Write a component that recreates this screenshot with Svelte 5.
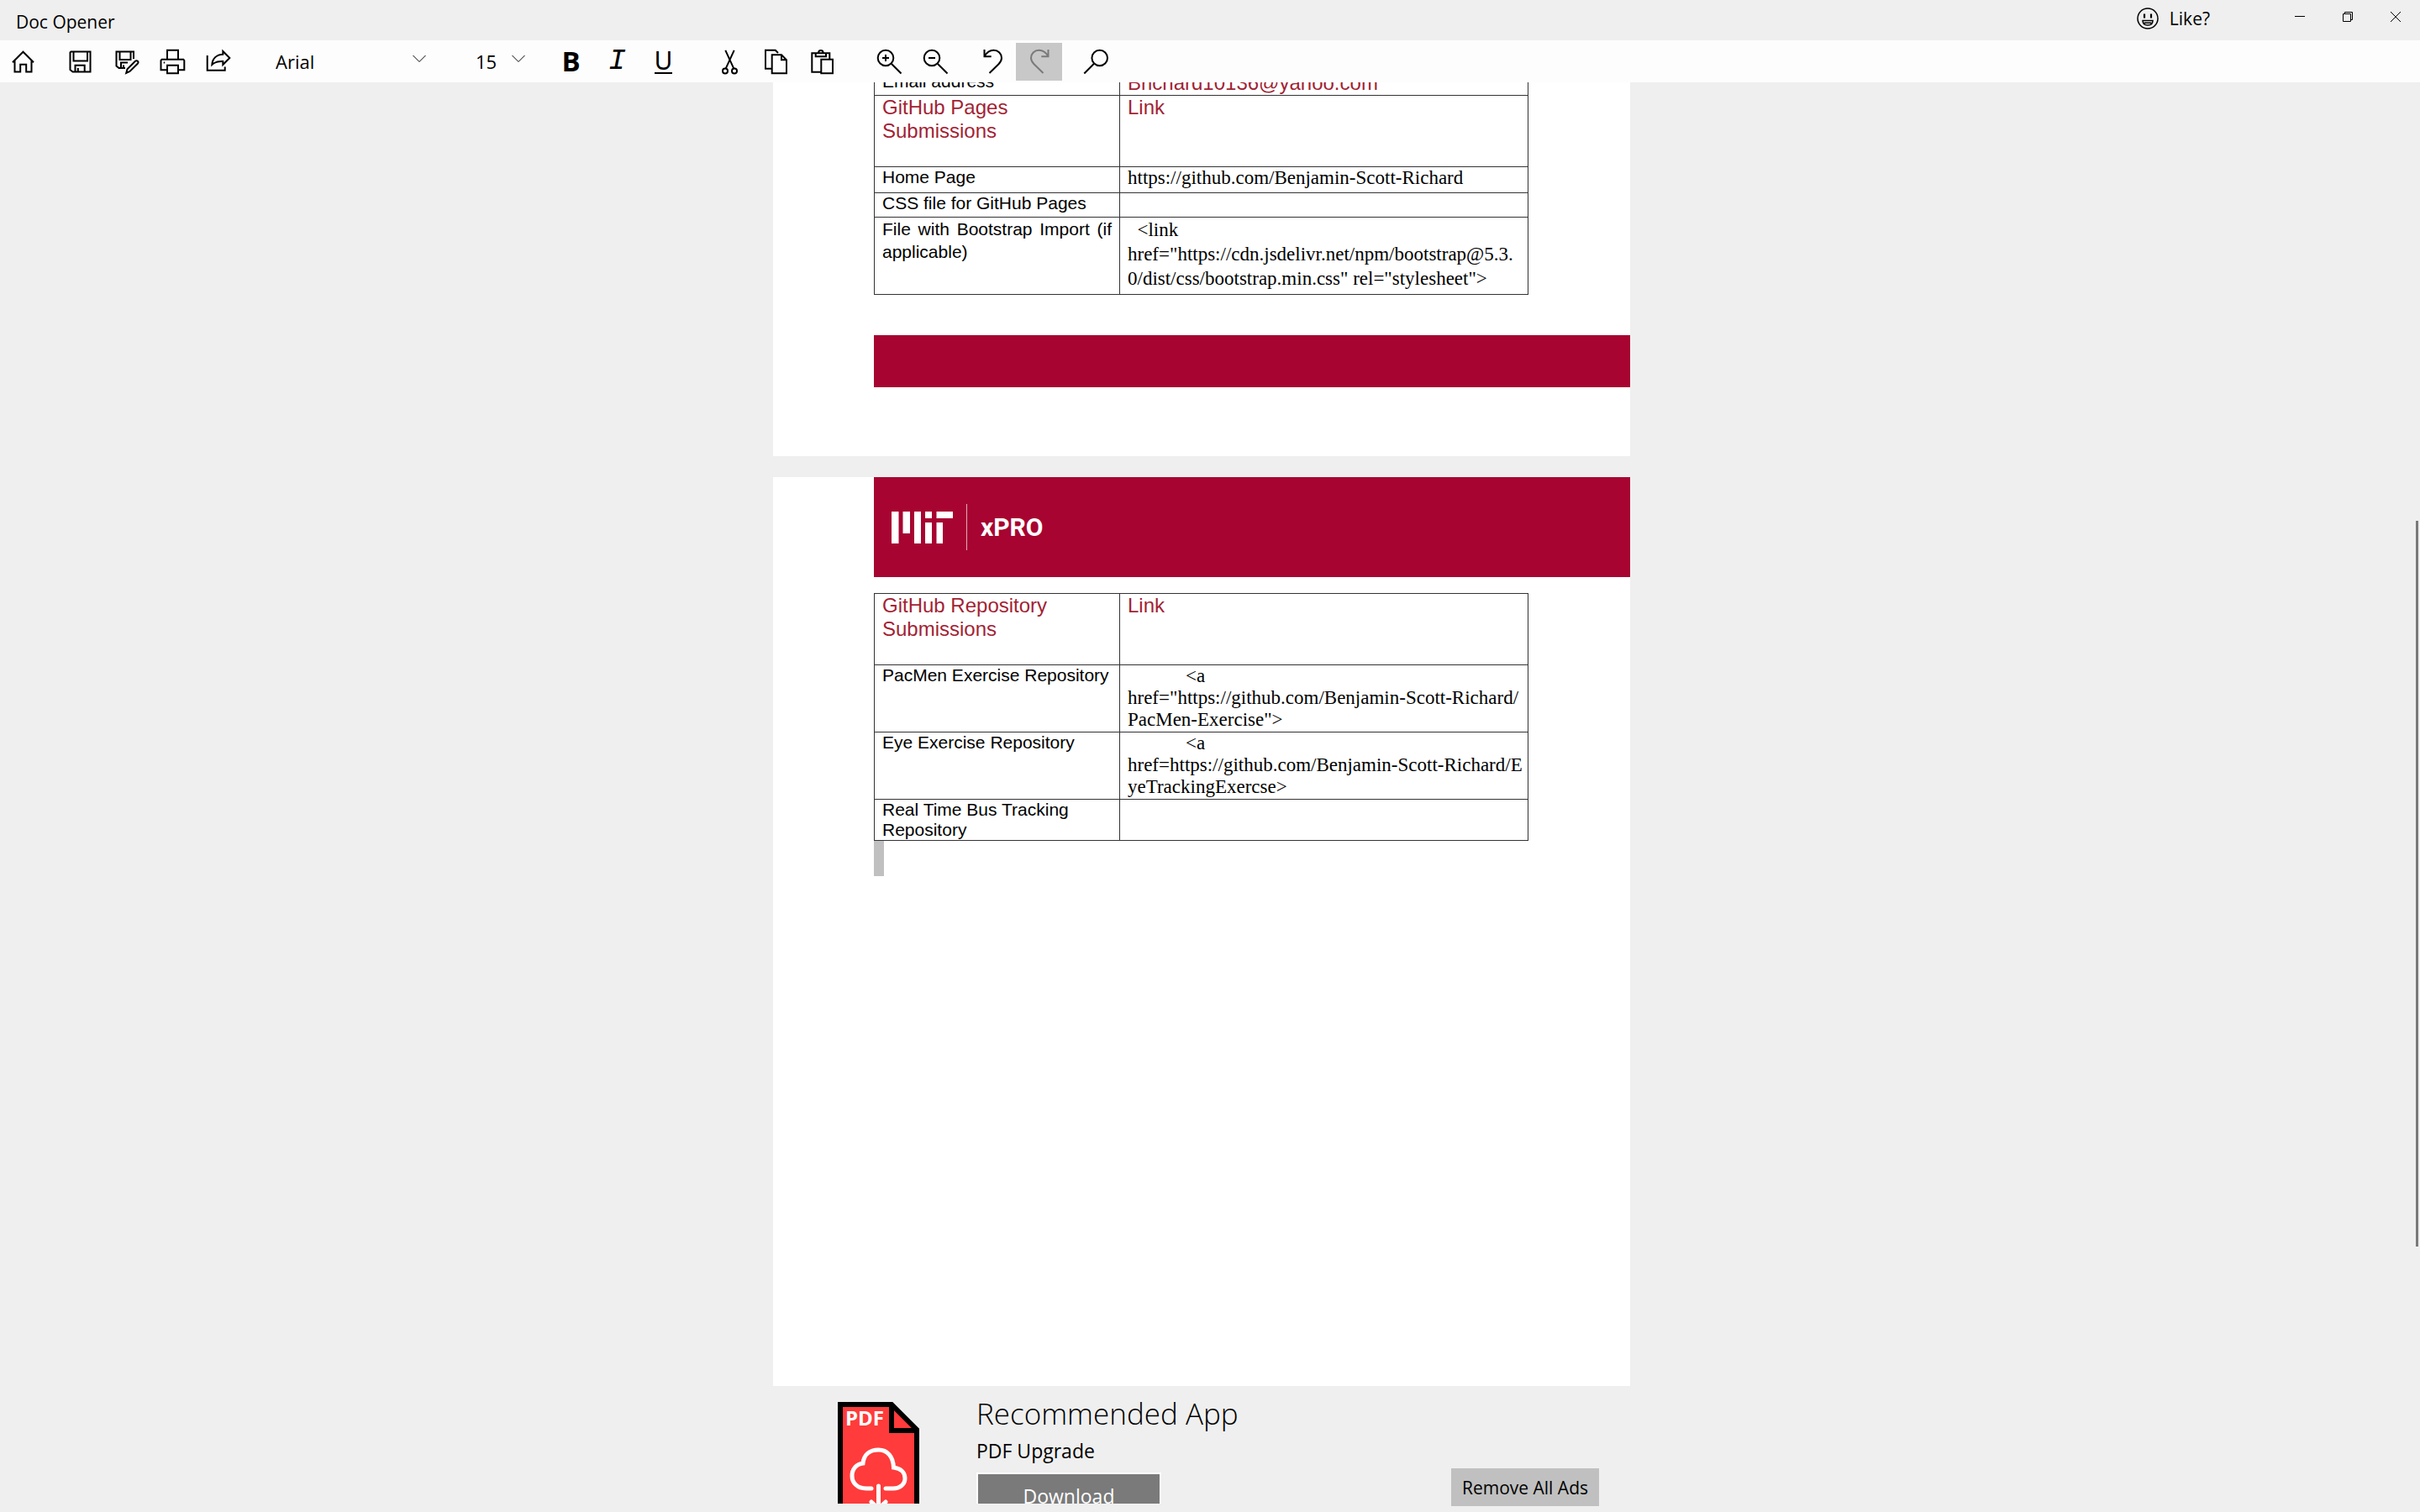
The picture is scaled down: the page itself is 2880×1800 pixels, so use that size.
<script>
  let font = $state('Arial');
  let size = $state('15');

  const profileRows = [
    { name: 'Home Page', link: 'https://github.com/Benjamin-Scott-Richard', h: 'h31' },
    { name: 'CSS file for GitHub Pages', link: '', h: 'h29' }
  ];
</script>

{#snippet magnifier(sign)}
  <circle cx="12" cy="11" r="9.3" />
  <path d="M18.7 17.7 30.5 29.5M8 11h8" />
  {#if sign === 'in'}<path d="M12 7v8" />{/if}
{/snippet}

<div class="app">
  <header class="titlebar">
    <h1>Doc Opener</h1>
    <div class="window-controls">
      <button class="like">
        <svg width="26" height="26" viewBox="0 0 26 26" aria-hidden="true">
          <circle cx="13" cy="13" r="12" />
          <path d="M9 7.500v5M17 7.500v5" stroke-width="2.200" />
          <path d="M7 15.500h12c0 3.500-2.500 5.500-6 5.500s-6-2-6-5.500zM8.500 18.300h9" />
        </svg>
        <span>Like?</span>
      </button>
      <button class="win" aria-label="Minimise">
        <svg width="14" height="14" viewBox="0 0 14 14"><path d="M1 6.500h12" /></svg>
      </button>
      <button class="win" aria-label="Restore">
        <svg width="14" height="14" viewBox="0 0 14 14"><path d="M1.500 3.500h9v9h-9zM3.500 3.500v-2h9v9h-2" /></svg>
      </button>
      <button class="win" aria-label="Close">
        <svg width="14" height="14" viewBox="0 0 14 14"><path d="M1 1l12 12M13 1L1 13" /></svg>
      </button>
    </div>
  </header>

  <nav class="toolbar" aria-label="Document tools">
    <div class="group">
      <button class="tool" aria-label="Home">
        <svg viewBox="0 0 31 31"><path d="M3 16.300 15.500 3.700 28 16.300M5.500 14.300V27.500H12.200V18.700H19.200V27.500H25.500V14.300" /></svg>
      </button>
    </div>
    <div class="group">
      <button class="tool" aria-label="Save">
        <svg viewBox="0 0 31 31"><path d="M4.500 3.500H27.500V27.500H6.500L3.500 25V4.500zM7.500 3.500V14.500H24V3.500M9.500 27.500V19.700H20.700V27.500M12.800 27.500V23" /></svg>
      </button>
      <button class="tool" aria-label="Save as">
        <svg viewBox="0 0 31 31"><path d="M14 23H6.500L3.500 20.500V3.500H24V12M7.500 3.500V13H20.500V3.500M9 23V16.500H17M12 22.500V19.500M15.200 29l1.300-4.700L26 14.800c2-1.600 4.500.6 3 2.700L19.500 27z" /></svg>
      </button>
      <button class="tool" aria-label="Print">
        <svg viewBox="0 0 31 31"><path d="M9 12.700V1.700H22V12.700M9 25.300H1.500V14l1-1.300H28.300l1 1.300V25.300H22M9 19.700H22V29.300H9z" /><path d="M4.700 16.500h1.500" /></svg>
      </button>
      <button class="tool" aria-label="Share">
        <svg viewBox="0 0 31 31"><path d="M1.700 8V25.700H22.700V21.500M7.300 19C7.600 11.500 13 6.900 20.300 6.700V3L28.300 11 20.300 19V15C14.500 14.800 10.500 15.800 7.300 19z" /></svg>
      </button>
    </div>

    <div class="pick family">
      <select aria-label="Font" bind:value={font}>
        <option>Arial</option>
        <option>Calibri</option>
      </select>
      <svg width="16" height="10" viewBox="0 0 16 10" aria-hidden="true"><path d="M.5 1 8 8.500 15.500 1" /></svg>
    </div>
    <div class="pick size">
      <select aria-label="Font size" bind:value={size}>
        <option>15</option>
        <option>16</option>
      </select>
      <svg width="16" height="10" viewBox="0 0 16 10" aria-hidden="true"><path d="M.5 1 8 8.500 15.500 1" /></svg>
    </div>

    <div class="group">
      <button class="tool bold" aria-label="Bold">B</button>
      <button class="tool italic" aria-label="Italic">I</button>
      <button class="tool underline" aria-label="Underline"><span>U</span></button>
    </div>
    <div class="group edit">
      <button class="tool" aria-label="Cut">
        <svg viewBox="0 0 31 31"><path d="M10.300 1.800 20.300 23.700M20.700 1.800 10.700 23.700" /><circle cx="10" cy="26.500" r="3" /><circle cx="21" cy="26.500" r="3" /></svg>
      </button>
      <button class="tool" aria-label="Copy">
        <svg viewBox="0 0 31 31"><path d="M10.500 23.700H3V1.700H14.700L18 5M10.700 7.300H22L28 13.300V29.300H10.700zM22 7.300V13.300H28" /></svg>
      </button>
      <button class="tool" aria-label="Paste">
        <svg viewBox="0 0 31 31"><path d="M14.300 27.700H3.300V5.300H24.300V12.700M7.700 5.300V9.300H20V5.300M11 5.300C11 .8 16.700.8 16.700 5.300M14.300 12.700H28V29.300H14.300z" /></svg>
      </button>
    </div>
    <div class="group edit">
      <button class="tool" aria-label="Zoom in"><svg viewBox="0 0 31 31">{@render magnifier('in')}</svg></button>
      <button class="tool" aria-label="Zoom out"><svg viewBox="0 0 31 31">{@render magnifier('out')}</svg></button>
    </div>
    <div class="group history">
      <button class="tool" aria-label="Undo">
        <svg viewBox="0 0 31 31"><path d="M5.500 1V9.200H13.700M5.500 9.200C8.500 4 12 1.800 16.500 1.800C22 1.800 26 6 26 11C26 14.500 24.500 16.200 22.500 18.200L11.500 29" /></svg>
      </button>
      <button class="tool" aria-label="Redo" disabled>
        <svg viewBox="0 0 31 31"><path d="M26.500 1V9.200H18.300M26.500 9.200C23.500 4 20 1.800 15.500 1.800C10 1.800 6 6 6 11C6 14.500 7.500 16.200 9.500 18.200L20.500 29" /></svg>
      </button>
    </div>
    <div class="group">
      <button class="tool" aria-label="Find">
        <svg viewBox="0 0 31 31"><circle cx="19.700" cy="11" r="9.300" /><path d="M13 17.700 1.300 29.500" /></svg>
      </button>
    </div>
  </nav>

  <main class="workspace">
    <article class="page first">
      <table>
        <tbody>
          <tr class="h29">
            <td>Email address</td>
            <td class="red"><a href="mailto:Brichard10136@yahoo.com">Brichard10136@yahoo.com</a></td>
          </tr>
          <tr class="h85">
            <th scope="col">GitHub Pages<br />Submissions</th>
            <th scope="col">Link</th>
          </tr>
          {#each profileRows as row}
            <tr class={row.h}>
              <td>{row.name}</td>
              <td class="code">{row.link}</td>
            </tr>
          {/each}
          <tr class="h92 airy">
            <td>File with Bootstrap Import (if applicable)</td>
            <td class="code">{'  <link'}<br />{'href="https://cdn.jsdelivr.net/npm/bootstrap@5.3.'}<br />{'0/dist/css/bootstrap.min.css" rel="stylesheet">'}</td>
          </tr>
        </tbody>
      </table>
      <div class="band foot"></div>
    </article>

    <article class="page second">
      <div class="band head">
        <svg class="mit" width="73" height="38" viewBox="0 0 73 38" role="img" aria-label="MIT">
          <path d="M0 0h8.500v38H0zM13.500 0h8.500v26h-8.500zM27 0h8v38h-8zM40 0h8v8h-8zM40 13h8v25h-8zM53.500 0h19.500v8h-19.500zM53.500 13h7.500v25h-7.500z" />
        </svg>
        <span class="rule"></span>
        <span class="xpro">xPRO</span>
      </div>
      <table>
        <tbody>
          <tr class="h85">
            <th scope="col">GitHub Repository<br />Submissions</th>
            <th scope="col">Link</th>
          </tr>
          <tr class="h80">
            <td>PacMen Exercise Repository</td>
            <td class="code">{'            <a'}<br />{'href="https://github.com/Benjamin-Scott-Richard/'}<br />{'PacMen-Exercise">'}</td>
          </tr>
          <tr class="h80">
            <td>Eye Exercise Repository</td>
            <td class="code">{'            <a'}<br />{'href=https://github.com/Benjamin-Scott-Richard/E'}<br />{'yeTrackingExercse>'}</td>
          </tr>
          <tr class="h49">
            <td>Real Time Bus Tracking<br />Repository</td>
            <td></td>
          </tr>
        </tbody>
      </table>
      <div class="selection"></div>
    </article>
    <div class="scroll-thumb"></div>
  </main>

  <footer class="ad">
    <div class="ad-body">
      <svg class="pdf" width="98" height="122" viewBox="0 0 98 122" role="img" aria-label="PDF Upgrade logo">
        <path d="M3 4H64L94 34V140H3z" fill="#ff3b3b" stroke="#000" stroke-width="6" />
        <path d="M64 4V35H94" fill="none" stroke="#000" stroke-width="6" />
        <text x="9" y="29">PDF</text>
        <path d="M40 104H34C23 104 17 97 17 89C17 81 22 75 30 74C31 64 38 58 48.500 58C59 58 66 66 66.500 79C75 80 80 85 80 92C80 99 74 104 66 104H57M48.500 101V124M40 120 48.500 128 57 120" class="cloud" />
      </svg>
      <div class="ad-text">
        <h2>Recommended App</h2>
        <p>PDF Upgrade</p>
        <button class="download">Download</button>
      </div>
    </div>
    <button class="remove">Remove All Ads</button>
  </footer>
</div>

<style>
  :global(body) {
    background: #efefef;
  }

  .app {
    height: 100vh;
    display: flex;
    flex-direction: column;
    overflow: hidden;
    background: #efefef;
    color: #000;
    font-family: 'Open Sans', 'Noto Sans', sans-serif;
    font-size: 22px;
  }

  button,
  select {
    border: 0;
    padding: 0;
    margin: 0;
    background: none;
    font: inherit;
    color: inherit;
  }

  svg {
    display: block;
    fill: none;
    stroke: #000;
    stroke-width: 2;
  }

  .titlebar {
    flex: none;
    height: 48px;
    display: flex;
    justify-content: space-between;
    padding-left: 19px;
  }

  h1 {
    margin: 0;
    font-size: 21px;
    font-weight: 400;
    line-height: 52px;
  }

  .window-controls {
    display: flex;
    align-items: flex-start;
    padding-right: 1px;
  }

  .like {
    display: flex;
    gap: 13px;
    height: 44px;
    align-items: center;
    margin-right: 78px;
    font-size: 21px;
    line-height: 50px;
  }

  .like svg {
    stroke-width: 1.500;
  }

  .win {
    width: 57px;
    height: 40px;
    display: grid;
    place-items: center;
  }

  .win svg {
    stroke-width: 1;
  }

  .toolbar {
    flex: none;
    height: 50px;
    display: flex;
    align-items: center;
    gap: 13px;
    background: #fdfdfd;
  }

  .group {
    display: flex;
  }

  .edit {
    margin-left: 11px;
  }

  .history {
    margin-left: 1px;
  }

  .tool {
    width: 55px;
    height: 45px;
    display: grid;
    place-items: center;
  }

  .tool svg {
    width: 31px;
    height: 31px;
  }

  .tool:disabled {
    background: #c8c8c8;
  }

  .tool:disabled svg {
    stroke: #7a7a7a;
  }

  .bold {
    font-size: 33px;
    font-weight: 700;
    line-height: 44px;
  }

  .italic {
    font-family: 'Liberation Mono', monospace;
    font-size: 35px;
    font-style: italic;
    line-height: 44px;
  }

  .underline span {
    font-family: 'Noto Sans', sans-serif;
    font-size: 30px;
    font-weight: 400;
    line-height: 28px;
    border-bottom: 2px solid #000;
  }

  .pick {
    display: grid;
    align-items: center;
    height: 45px;
  }

  .pick select,
  .pick svg {
    grid-area: 1 / 1;
  }

  .pick select {
    appearance: none;
    height: 45px;
    width: 100%;
  }

  .pick svg {
    justify-self: end;
    margin-right: 14px;
    margin-bottom: 6px;
    stroke-width: 1;
    pointer-events: none;
  }

  .family {
    width: 220px;
    margin-right: 20px;
  }

  .family select {
    padding-left: 27px;
  }

  .size {
    width: 85px;
  }

  .size select {
    padding-left: 12px;
  }

  .workspace {
    flex: 1;
    min-height: 0;
    position: relative;
    overflow: hidden;
    display: flex;
    flex-direction: column;
    justify-content: flex-end;
    align-items: center;
    gap: 25px;
    padding-right: 20px;
  }

  .page {
    flex: none;
    width: 1020px;
    box-sizing: border-box;
    padding-left: 120px;
    background: #fff;
  }

  .first {
    padding-bottom: 82px;
  }

  .second {
    min-height: 1082px;
  }

  .band {
    background: #a70431;
  }

  .foot {
    height: 62px;
    margin-top: 48px;
  }

  .head {
    height: 119px;
    display: flex;
    align-items: center;
    padding-left: 21px;
    margin-bottom: 19px;
    box-sizing: border-box;
  }

  .mit {
    fill: #fff;
    stroke: none;
  }

  .rule {
    width: 1px;
    height: 55px;
    margin: 0 16px;
    background: #e3a9b9;
  }

  .xpro {
    color: #fff;
    font-family: Roboto, sans-serif;
    font-weight: 700;
    font-size: 30px;
    line-height: 36px;
  }

  table {
    width: 779px;
    table-layout: fixed;
    border-collapse: collapse;
    font-family: 'Liberation Sans', Arial, sans-serif;
    font-size: 21px;
    line-height: 24px;
  }

  td,
  th {
    padding: 0 9px;
    border: 1px solid #333;
    vertical-align: top;
    text-align: left;
    font-weight: 400;
  }

  td:first-child,
  th:first-child {
    width: 273px;
  }

  th,
  .red {
    color: #a31f34;
    font-size: 24px;
    line-height: 28px;
  }

  .red a {
    color: inherit;
    text-decoration: none;
  }

  .code {
    font-family: 'Liberation Serif', 'Times New Roman', serif;
    font-size: 23px;
    line-height: 26px;
    white-space: pre;
  }

  .h29 { height: 29px; }
  .h31 { height: 31px; }
  .h49 { height: 49px; }
  .h80 { height: 80px; }
  .h85 { height: 85px; }
  .h92 { height: 92px; }

  .airy td:first-child {
    line-height: 27px;
    text-align: justify;
  }

  .airy .code {
    line-height: 29px;
  }

  .selection {
    width: 12px;
    height: 42px;
    background: #c0c0c0;
  }

  .scroll-thumb {
    position: absolute;
    right: 2px;
    top: 522px;
    width: 3px;
    height: 864px;
    background: #7a7a7a;
  }

  .ad {
    flex: none;
    align-self: center;
    width: 1020px;
    height: 150px;
    box-sizing: border-box;
    display: flex;
    justify-content: space-between;
    align-items: flex-end;
    margin-right: 20px;
    padding: 0 37px 0 77px;
  }

  .ad-body {
    height: 140px;
    overflow: hidden;
    display: flex;
    gap: 67px;
    align-self: flex-start;
  }

  .pdf {
    flex: none;
    margin-top: 18px;
  }

  .pdf text {
    font-size: 24px;
    font-weight: 700;
    fill: #fff;
    stroke: none;
  }

  .cloud {
    stroke: #fff;
    stroke-width: 5;
    stroke-linecap: round;
  }

  h2,
  .ad-text p {
    margin: 0;
    white-space: nowrap;
  }

  h2 {
    font-size: 35px;
    font-weight: 300;
    line-height: 66px;
  }

  .ad-text p {
    font-size: 23px;
    line-height: 22px;
    margin-bottom: 15px;
  }

  .download {
    width: 220px;
    height: 56px;
    border: 2px solid #fff;
    background: #7a7a7a;
    color: #fff;
    font-size: 23px;
  }

  .remove {
    width: 176px;
    height: 45px;
    margin-bottom: 7px;
    background: #c0c0c0;
    font-size: 21px;
    white-space: nowrap;
  }
</style>
